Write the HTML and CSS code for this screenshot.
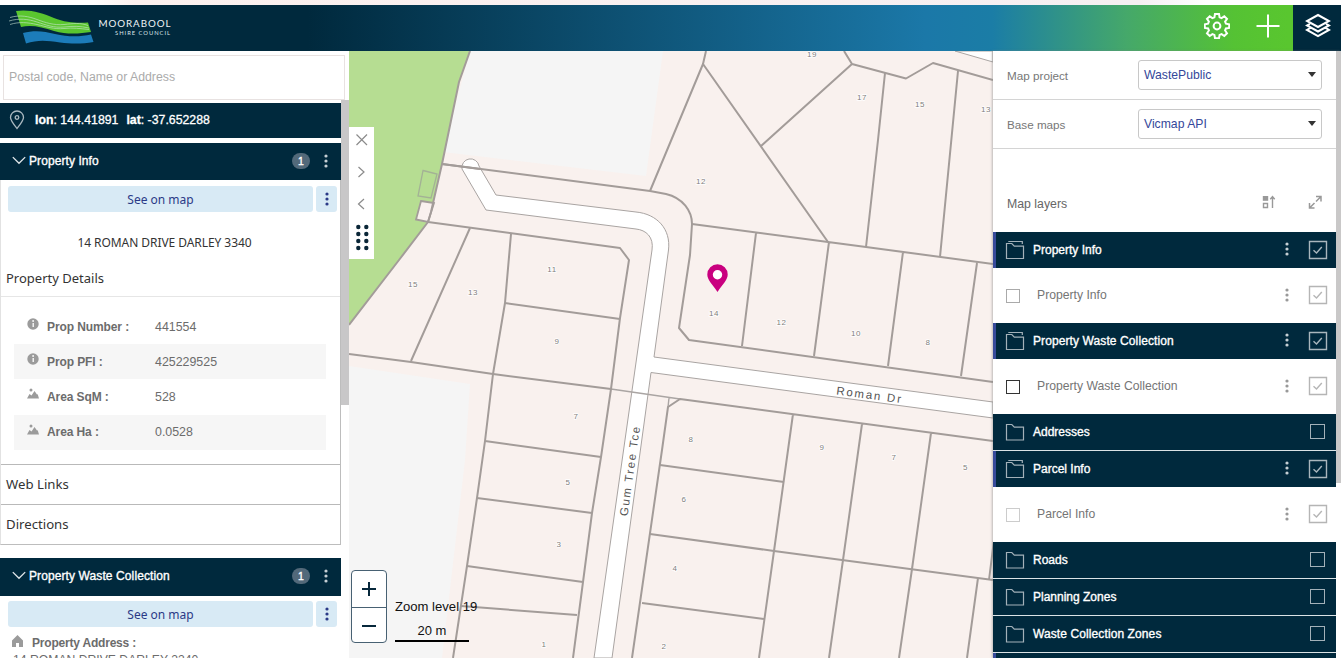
FILE: index.html
```html
<!DOCTYPE html>
<html lang="en">
<head>
<meta charset="utf-8">
<title>Moorabool Shire Council</title>
<link rel="stylesheet" href="styles.css">
</head>
<body>
<svg class="defs" aria-hidden="true">
  <symbol id="folder" viewBox="0 0 20 20"><path d="M1.500 2.500h5.300l2.500 2.600h9.200v12.900h-17z"/></symbol>
  <symbol id="folder-open" viewBox="0 0 20 20"><path d="M1.500 3.500h5.300l2.500 2.600h9.200v12.400h-17zM3.300 1.500h14v2.400"/></symbol>
  <symbol id="check" viewBox="0 0 20 20"><path d="M1.500 1.500h17v17h-17zM5.500 10.300l3 2.700 5.300-6"/></symbol>
  <symbol id="dots" viewBox="0 0 4 14"><circle cx="2" cy="2" r="1.600"/><circle cx="2" cy="7" r="1.600"/><circle cx="2" cy="12" r="1.600"/></symbol>
  <symbol id="info" viewBox="0 0 12 12"><circle cx="6" cy="6" r="5.700" fill="#9b9b9b"/><path d="M6.200 5v4" stroke="#fff" stroke-width="1.300" fill="none"/><circle cx="6.100" cy="3" r=".9" fill="#fff"/></symbol>
  <symbol id="area" viewBox="0 0 12 12"><path d="M0 10.500l2.500-4.500 2 1.500L7.500 3l2.500 3.500.700-.3 1.300 4.300z" fill="#9b9b9b"/><circle cx="4" cy="2" r="1.500" fill="#9b9b9b"/></symbol>
</svg>
<div class="app">
  <div class="strip"></div>
  <header class="header">
    <svg class="logo" viewBox="0 0 180 46">
      <path d="M16 6C30 4 42 8 54 13 66 18 78 18 88 17.500L91 27C80 28.500 68 30 54 26 42 22 31 19.500 21 22z" fill="#5ac62f"/>
      <path d="M23 28C34 25 44 26 55 29 68 32 80 32 91 29.500L93.500 37C82 39 72 39 60 37.500 47 35.500 38 34.500 26 38.500z" fill="#1c7cba"/>
      <g fill="none" stroke="#cfe6d6" stroke-width=".7" opacity=".85"><path d="M10 12.500c10-3 19-1 27 2s17 6 27 5 16-2 24 1"/><path d="M9 16c10-3 19-2 28 1s17 6 27 5 16-1 25 1"/><path d="M10 19.500c9-3 18-2 27 0s17 5 27 4 15 0 25 1"/></g>
      <text x="98.500" y="22" class="logo-a" textLength="72">MOORABOOL</text>
      <text x="115" y="30" class="logo-b" textLength="55">SHIRE COUNCIL</text>
    </svg>
    <nav class="tools">
      <svg class="tool" viewBox="0 0 26 26"><path d="M11 1h4l.6 3.300 2 .8 2.700-1.900 2.700 2.700-1.900 2.800.8 2 3.300.6v3.600l-3.300.6-.8 2 1.900 2.800-2.700 2.700-2.700-1.900-2 .8L15 25.200h-4l-.6-3.300-2-.8-2.700 1.900L3 20.300l1.900-2.800-.8-2-3.300-.6v-3.600l3.300-.6.8-2L3 5.900l2.700-2.700 2.700 1.900 2-.8z"/><circle cx="13" cy="13" r="3.400"/></svg>
      <svg class="tool" viewBox="0 0 26 26"><path d="M13 1.500v23M1.500 13h23"/></svg>
    </nav>
    <div class="layers-btn"><svg class="tool" viewBox="0 0 26 26"><path d="M13 2l11 6-11 6L2 8z"/><path d="M5 10.800l-3 1.700 11 6 11-6-3-1.700M5 15.200l-3 1.700L13 23l11-6.100-3-1.700"/></svg></div>
  </header>
  <main class="main">
    <aside class="left">
      <div class="search">Postal code, Name or Address</div>
      <div class="results">
        <div class="cards">
          <div class="lonlat">
            <svg class="pin" viewBox="0 0 16 20"><path d="M8 18.500C4 13.500 1.500 10.500 1.500 7.500a6.500 6.500 0 0 1 13 0c0 3-2.500 6-6.500 11z"/><circle cx="8" cy="7.500" r="1.800"/></svg>
            <span><b>lon</b>: 144.41891</span><span class="lat"><b>lat</b>: -37.652288</span>
          </div>
          <div class="section-head"><svg class="chev" viewBox="0 0 12 8"><path d="M.5 1L6 6.500 11.500 1"/></svg><span class="grow">Property Info</span><span class="badge">1</span><svg class="dots"><use href="#dots"/></svg></div>
          <div class="card">
            <div class="actions"><div class="see">See on map</div><div class="more"><svg class="dots"><use href="#dots"/></svg></div></div>
            <div class="address">14 ROMAN DRIVE DARLEY 3340</div>
            <div class="details-title">Property Details</div>
            <div class="details">
              <div class="row"><svg class="ri"><use href="#info"/></svg><b>Prop Number :</b><span>441554</span></div>
              <div class="row alt"><svg class="ri"><use href="#info"/></svg><b>Prop PFI :</b><span>425229525</span></div>
              <div class="row"><svg class="ri"><use href="#area"/></svg><b>Area SqM :</b><span>528</span></div>
              <div class="row alt"><svg class="ri"><use href="#area"/></svg><b>Area Ha :</b><span>0.0528</span></div>
            </div>
            <div class="fold">Web Links</div>
            <div class="fold">Directions</div>
          </div>
          <div class="section-head second"><svg class="chev" viewBox="0 0 12 8"><path d="M.5 1L6 6.500 11.500 1"/></svg><span class="grow wide">Property Waste Collection</span><span class="badge">1</span><svg class="dots"><use href="#dots"/></svg></div>
          <div class="actions in-second"><div class="see">See on map</div><div class="more"><svg class="dots"><use href="#dots"/></svg></div></div>
          <div class="paddr"><svg class="home" viewBox="0 0 11 12"><path d="M0 5.500L5.500 0 11 5.500V12H7V8H4v4H0z"/></svg><b>Property Address :</b></div>
          <div class="paddr-value">14 ROMAN DRIVE DARLEY 3340</div>
        </div>
        <div class="scroll"><div class="thumb"></div></div>
      </div>
    </aside>
    <section class="map">
      <svg class="canvas" viewBox="349 51 644 607">
        <path d="M349 51H993V658H349z" fill="#f9f1ee"/>
        <path d="M470 51H663L646 176 443 152z" fill="#f5f5f5"/>
        <path d="M349 366L470 384 465 460 442 658H349z" fill="#f5f5f5"/>
        <path d="M349 51H470L459 82 442 164 431 212 428 222 399 260 349 325z" fill="#b6dd92"/>
        <path d="M955 51L993 62V51z" fill="#fff" stroke="#aaa5a3"/>
        <path d="M462 169A8.500 8.500 0 0 1 479 166L496 195 636 212C657 214 671 229 668.500 250L654 357 993 402V418L651 372.500 612 658H594L652 250C654 237 646 230 636 229L486 210z" fill="#fff" stroke="#a9a4a2"/>
        <path d="M423 170.500L437 174 431 198 418 196z" fill="none" stroke="#a3b295" stroke-width="1.300"/>
        <path d="M611 389L680 399M669 398L668 407" fill="none" stroke="#aaa5a3" stroke-width="1.400"/>
        <path d="M421 201L434 203 428 222 416 219.500z" fill="#f9f1ee" stroke="#a39c99" stroke-width="1.800"/>
        <path d="M442 164L480 169" class="lots"/>
        <g class="lots">
          <path d="M470 51L459 82 442 164 431 212 428 222 399 260 349 325"/>
          <path d="M442 164L650 191 666 194C683 198 692 211 692 224L690 255 679 328 689 340 993 382"/>
          <path d="M650 191L703 64 706 51M703 64L828 242M761 146L852 64 844 51M852 64L906 78.500 933 63 993 80M885 73L878 140 866 247M958 71L940 257"/>
          <path d="M692 224L828 242 866 247 993 264M756 233L742 346M829 242L814 356M903 252L888 366M977 263L961 376"/>
          <path d="M428 222L620 248 629 260 620 318 611 389 601 457 592 513 583 582 573 658"/>
          <path d="M470 228L411 361M511 234L505 303 493 374 485 441 477 498 467 566 453 658"/>
          <path d="M349 354L411 362 493 374 611 389M505 303L620 319M485 441L601 457M477 498L592 513M467 566L583 582M461 606L577 615"/>
          <path d="M993 441L680 399 668 407 662 450 632 658M793 414L774 551 759 658M862 424L843 560 829 658M931 433L912 569 899 658M994 540L989 580M978 578L967 658"/>
          <path d="M660 465L784 482M650 534L774 551 993 580M642 603L764 619"/>
        </g>
        <g class="nums">
          <text x="701" y="184">12</text><text x="812" y="56.500">19</text><text x="862" y="100">17</text><text x="920" y="107">15</text><text x="986" y="112">13</text>
          <text x="714" y="316">14</text><text x="781.500" y="325">12</text><text x="856" y="335.500">10</text><text x="928" y="345">8</text>
          <text x="413" y="286.500">15</text><text x="473" y="294.500">13</text><text x="552" y="272">11</text><text x="557" y="343.500">9</text><text x="576" y="418.500">7</text><text x="568" y="484.500">5</text><text x="559" y="546.500">3</text><text x="544" y="647">1</text>
          <text x="691" y="441.500">8</text><text x="684" y="502">6</text><text x="675" y="571">4</text><text x="664" y="649">2</text><text x="822" y="450">9</text><text x="894" y="460">7</text><text x="965.500" y="469.500">5</text>
        </g>
        <g class="roads">
          <text transform="translate(836 394.500) rotate(7.500)" textLength="65">Roman Dr</text>
          <text transform="translate(627.500 516.500) rotate(-82)" textLength="90">Gum Tree Tce</text>
        </g>
        <path d="M717.500 292C712 283.500 707.300 280 707.300 274.500a10.200 10.200 0 0 1 20.400 0C727.700 280 723 283.500 717.500 292z" fill="#c9007f"/>
        <circle cx="717.500" cy="274.800" r="4.700" fill="#fff"/>
      </svg>
      <div class="map-tools">
        <svg viewBox="0 0 25 132"><g fill="none" stroke="#8b8b8b" stroke-width="1.200"><path d="M7.500 7.500l10.500 10.500M18 7.500L7.500 18M9.500 40l5.500 5-5.500 5M15 72l-5.500 5 5.500 5"/></g><g fill="#0a2637"><circle cx="9.300" cy="100" r="2.200"/><circle cx="17.300" cy="100" r="2.200"/><circle cx="9.300" cy="107" r="2.200"/><circle cx="17.300" cy="107" r="2.200"/><circle cx="9.300" cy="114" r="2.200"/><circle cx="17.300" cy="114" r="2.200"/><circle cx="9.300" cy="121" r="2.200"/><circle cx="17.300" cy="121" r="2.200"/></g></svg>
      </div>
      <div class="map-foot">
        <div class="zoom"><div class="zb"><svg viewBox="0 0 14 14"><path d="M0 7h14M7 0v14"/></svg></div><div class="zb"><svg viewBox="0 0 14 14"><path d="M0 7h14"/></svg></div></div>
        <div class="scale"><div>Zoom level 19</div><div class="bar">20 m</div></div>
      </div>
    </section>
    <aside class="right">
      <div class="panel">
        <div class="field"><span>Map project</span><div class="select">WastePublic<i></i></div></div>
        <div class="field"><span>Base maps</span><div class="select">Vicmap API<i></i></div></div>
        <div class="layers-head"><span class="grow">Map layers</span>
          <svg class="hi" viewBox="0 0 14 14"><g fill="none" stroke="#999" stroke-width="1.400"><path d="M1.500 8.500h4v4h-4zM10.500 13V2M8.300 4.300l2.200-2.700 2.200 2.700"/></g><path d="M.800 1h5.400v4.800H.800z" fill="#999"/></svg>
          <svg class="hi last" viewBox="0 0 14 14"><path d="M8 1.500h5v5M13 1.500L8 6.500M1.500 8v5h5M1.500 13l5-5" fill="none" stroke="#999" stroke-width="1.500"/></svg>
        </div>
        <div class="group on"><svg class="fi"><use href="#folder-open"/></svg><span class="grow">Property Info</span><svg class="dots"><use href="#dots"/></svg><svg class="ck"><use href="#check"/></svg></div>
        <div class="layer"><i class="box"></i><span class="grow">Property Info</span><svg class="dots"><use href="#dots"/></svg><svg class="ck"><use href="#check"/></svg></div>
        <div class="group on"><svg class="fi"><use href="#folder-open"/></svg><span class="grow wide">Property Waste Collection</span><svg class="dots"><use href="#dots"/></svg><svg class="ck"><use href="#check"/></svg></div>
        <div class="layer"><i class="box dark"></i><span class="grow">Property Waste Collection</span><svg class="dots"><use href="#dots"/></svg><svg class="ck"><use href="#check"/></svg></div>
        <div class="group ruled"><svg class="fi"><use href="#folder"/></svg><span class="grow">Addresses</span><i class="empty"></i></div>
        <div class="group on"><svg class="fi"><use href="#folder-open"/></svg><span class="grow">Parcel Info</span><svg class="dots"><use href="#dots"/></svg><svg class="ck"><use href="#check"/></svg></div>
        <div class="layer"><i class="box faint"></i><span class="grow">Parcel Info</span><svg class="dots"><use href="#dots"/></svg><svg class="ck"><use href="#check"/></svg></div>
        <div class="group ruled"><svg class="fi"><use href="#folder"/></svg><span class="grow">Roads</span><i class="empty"></i></div>
        <div class="group ruled"><svg class="fi"><use href="#folder"/></svg><span class="grow">Planning Zones</span><i class="empty"></i></div>
        <div class="group ruled"><svg class="fi"><use href="#folder"/></svg><span class="grow wide">Waste Collection Zones</span><i class="empty"></i></div>
        <div class="group on"></div>
      </div>
      <div class="rscroll"></div>
    </aside>
  </main>
</div>
</body>
</html>
```
FILE: styles.css
```css
* { box-sizing: border-box; }
body { margin: 0; font-family: "Liberation Sans", Arial, sans-serif; font-size: 13px; background: #fff; }
b { font-weight: bold; }
.defs { position: absolute; width: 0; height: 0; }
.app { width: 1341px; height: 658px; display: flex; flex-direction: column; overflow: hidden; }
.strip { height: 5px; flex: none; background: linear-gradient(90deg, #fff 7%, #fcf1ef 10%, #f5eff2 85%, #fff 90%); }
.grow { flex: 1; }
.wide { letter-spacing: .1px; }

.header { height: 46px; flex: none; display: flex; background: linear-gradient(90deg, #00293d 0, #00293d 23%, #1b78a8 69%, #1b7da6 74%, #45a86a 84%, #55c234 92%, #59c62f 96%); }
.logo { width: 180px; height: 46px; }
.logo-a { font: 9.8px Lato, sans-serif; fill: #eef3f5; }
.logo-b { font: 5.8px Lato, sans-serif; fill: #dbe5e9; }
.tools { flex: 1; display: flex; justify-content: flex-end; gap: 25px; padding: 8px 12px 0 0; }
.tool { width: 26px; height: 26px; fill: none; stroke: #fff; stroke-width: 2; }
.layers-btn { width: 48px; background: #00293d; padding: 8px 0 0 12px; }

.main { flex: 1; display: flex; min-height: 0; }
.left { width: 349px; flex: none; display: flex; flex-direction: column; padding-top: 4px; }
.search { height: 45px; flex: none; width: 342px; margin-left: 3px; border: 1px solid #e8e2e1; padding: 0 5px; line-height: 43px; color: #ababab; font-size: 12.3px; }
.results { flex: 1; display: flex; min-height: 0; }
.cards { width: 341px; padding-top: 3px; overflow: hidden; }
.scroll { width: 8px; }
.thumb { height: 305px; background: #c8c7c8; }
.lonlat { height: 35px; margin-bottom: 5px; background: #00293d; color: #fff; display: flex; align-items: center; padding: 0 0 2px 9px; font-size: 12.3px; -webkit-text-stroke: .3px #fff; }
.pin { width: 16px; height: 20px; margin-right: 10px; fill: none; stroke: #aab9c1; stroke-width: 1.3; }
.lat { margin-left: 8px; }
.section-head { height: 37px; background: #00293d; color: #fff; display: flex; align-items: center; padding: 0 13px 2px 12px; font-size: 12px; letter-spacing: .08px; -webkit-text-stroke: .35px #fff; }
.chev { width: 14px; height: 9px; margin-right: 3px; fill: none; stroke: #dfe6e9; stroke-width: 1.2; }
.badge { width: 18px; height: 16px; margin: 1px 14px 0 0; border-radius: 8px; background: #52697a; text-align: center; font-size: 10.5px; line-height: 16px; }
.dots { width: 4px; height: 14px; fill: currentColor; }
.section-head .dots { fill: #c5cfd4; margin-top: 1px; }
.card { border: solid #bdbdbd; border-width: 0 1px 1px 1px; border-left-color: #e2e2e2; height: 365px; padding-top: 6px; }
.actions { display: flex; gap: 3px; padding: 0 3px 0 7px; }
.see, .more { height: 26px; border-radius: 3px; background: #d8eaf5; color: #2b3a87; display: flex; align-items: center; justify-content: center; }
.see { flex: 1; font: 12px "Noto Sans", sans-serif; }
.more { width: 21px; }
.address { height: 63px; padding: 0 12px 0 0; font: 12px/62px "Noto Sans", sans-serif; letter-spacing: -.06px; text-align: center; color: #333; }
.details-title { height: 22px; padding-left: 5px; font: 13px/6px "Noto Sans", sans-serif; color: #333; border-bottom: 1px solid #e6e6e6; }
.details { padding: 12px 14px 0 13px; height: 167px; }
.row { height: 35.2px; display: flex; align-items: center; font-size: 12.4px; color: #6c6c6c; padding-left: 13px; }
.alt { background: #f6f6f6; }
.ri { width: 12px; height: 12px; margin: -5px 8px 0 0; }
.row b { width: 108px; font-size: 12px; letter-spacing: -.1px; }
.fold { height: 40px; border-top: 1px solid #b9b9b9; padding-left: 5px; font: 13.2px/38px "Noto Sans", sans-serif; color: #333; }
.second { margin-top: 13px; height: 38px; padding-bottom: 3px; position: relative; }
.in-second { padding: 5px 4px 0 8px; }
.paddr { display: flex; align-items: center; gap: 9px; padding: 7px 0 0 12px; height: 25px; font-size: 12px; letter-spacing: -.25px; color: #6c6c6c; }
.paddr b { font-size: 12px; letter-spacing: -.2px; }
.home { width: 11px; height: 12px; margin-top: -5px; fill: #9b9b9b; }
.paddr-value { padding-left: 13px; font-size: 12.2px; line-height: 17px; color: #6c6c6c; }

.map { flex: 1; position: relative; }
.canvas { display: block; width: 644px; height: 607px; }
.lots { fill: none; stroke: #a39c99; stroke-width: 2; stroke-linejoin: round; }
.nums { font: 8px "Liberation Sans", sans-serif; letter-spacing: .5px; fill: #827d7b; text-anchor: middle; stroke: #fff; stroke-width: 1.5px; paint-order: stroke; }
.roads { font: 11.5px "Liberation Sans", sans-serif; fill: #555; }
.map-tools { position: absolute; left: 0; top: 76px; width: 25px; height: 132px; background: #fff; }
.map-tools svg { display: block; }
.map-foot { position: absolute; left: 2px; bottom: 15px; display: flex; gap: 8px; align-items: flex-end; }
.zoom { width: 36px; height: 73px; border: 1px solid #486173; border-radius: 4px; background: #fff; }
.zb { height: 36px; display: flex; align-items: center; justify-content: center; }
.zb + .zb { border-top: 1px solid #486173; }
.zb svg { width: 14px; height: 14px; stroke: #07283b; stroke-width: 2; }
.scale { width: 84px; font-size: 13.1px; line-height: 15px; color: #111; white-space: nowrap; padding-bottom: 1px; }
.bar { width: 74px; margin-top: 9px; padding-bottom: 2px; border-bottom: 2px solid #000; text-align: center; font-size: 13px; }

.right { width: 348px; flex: none; display: flex; background: #fff; box-shadow: -1px 0 2px #8888; z-index: 1; }
.panel { width: 343px; overflow: hidden; }
.rscroll { width: 5px; height: 432px; background: #c9c8c8; }
.field { height: 49px; display: flex; align-items: center; padding: 0 14px; border-bottom: 1px solid #d4d4d4; font-size: 11.7px; color: #777; }
.field span { width: 131px; }
.select { flex: 1; height: 30px; border: 1px solid #c8c8c8; border-radius: 3px; display: flex; align-items: center; justify-content: space-between; padding: 0 5px 1px; color: #34479a; font-size: 12.2px; }
.select i { border: 4.5px solid transparent; border-top: 5px solid #333; border-bottom: 0; }
.layers-head { height: 83px; display: flex; align-items: center; padding: 27px 14px 0; font-size: 12.3px; color: #666; }
.hi { width: 14px; height: 14px; margin-top: -5px; }
.last { margin-left: 32px; }
.group, .layer { display: flex; align-items: center; padding: 0 8px 1px 12px; font-size: 12px; }
.group { height: 36px; background: #00293d; color: #fff; -webkit-text-stroke: .35px #fff; }
.on { border-left: 3px solid #374a9b; padding-left: 9px; }
.ruled { height: 37px; border-bottom: 1px solid #dbe3e6; }
.fi { width: 20px; height: 20px; margin-right: 8px; fill: none; stroke: #a3b1b9; stroke-width: 1.2; }
.group .dots { fill: #c5cfd4; margin-top: -1px; }
.ck { width: 20px; height: 20px; margin-left: 19px; fill: none; stroke: #a9b6bd; stroke-width: 1.4; }
.empty { width: 15px; height: 15px; border: 1px solid #a3b1b9; margin-right: 3px; }
.layer { height: 55px; color: #757575; font-size: 12.2px; }
.layer .ck { stroke: #b5b5b5; }
.layer .dots { fill: #999; }
.box { width: 14px; height: 14px; border: 1px solid #aaa; margin: 2px 17px 0 1px; }
.dark { border-color: #333; }
.faint { border-color: #ccc; }
```
